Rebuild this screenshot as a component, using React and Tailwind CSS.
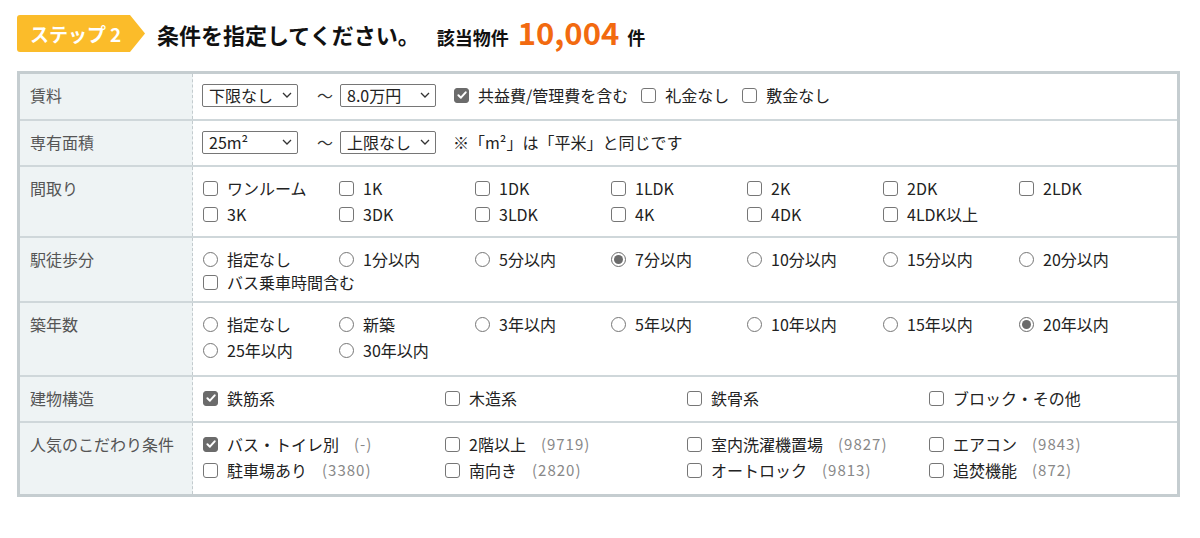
import React from "react";

function Box({ checked }) {
  return (
    <span
      className={
        checked
          ? "inline-flex items-center justify-center w-[15px] h-[15px] rounded-[3px] border border-[#6b6b6b] bg-[#6b6b6b] shrink-0"
          : "inline-flex items-center justify-center w-[15px] h-[15px] rounded-[3px] border border-[#767676] bg-white shrink-0"
      }
    >
      {checked && (
        <svg viewBox="0 0 12 12" className="w-[12px] h-[12px]">
          <path d="M2.4 6.3 L4.9 8.7 L9.7 3.3" fill="none" stroke="white" strokeWidth="2" strokeLinecap="round" strokeLinejoin="round" />
        </svg>
      )}
    </span>
  );
}

function Radio({ checked }) {
  return (
    <span
      className={
        checked
          ? "inline-flex items-center justify-center w-[15px] h-[15px] rounded-full border border-[#6b6b6b] bg-white shrink-0"
          : "inline-flex items-center justify-center w-[15px] h-[15px] rounded-full border border-[#767676] bg-white shrink-0"
      }
    >
      {checked && <span className="w-[9px] h-[9px] rounded-full bg-[#6b6b6b]" />}
    </span>
  );
}

function Item({ label, checked, radio, count }) {
  return (
    <div className="flex items-center h-[26px] pl-[1px]">
      {radio ? <Radio checked={checked} /> : <Box checked={checked} />}
      <span className="ml-[9px] whitespace-nowrap">{label}</span>
      {count && <span className="ml-[15px] text-[15px] tracking-[1px] text-[#888]">{count}</span>}
    </div>
  );
}

function Select({ label }) {
  return (
    <div className="flex items-center justify-between w-[96px] h-[23px] border border-[#767676] rounded-[2px] bg-white pl-[6px] pr-[5px] text-[16px] leading-none">
      <span className="whitespace-nowrap">{label}</span>
      <svg viewBox="0 0 10 6" className="w-[10px] h-[6px]">
        <path d="M1 1 L5 5 L9 1" fill="none" stroke="#333" strokeWidth="1.3" />
      </svg>
    </div>
  );
}

function Row({ label, children, h, last }) {
  return (
    <div className={(last ? "" : "border-b-2 border-[#cfd7da] ") + "flex " + h}>
      <div className="w-[173px] shrink-0 bg-[#eef3f4] border-r border-dashed border-[#c3cbce] pl-[10px] pt-[8px] leading-[26px] text-[#555]">
        {label}
      </div>
      <div className="flex-1 pl-[9px] pt-[8px]">{children}</div>
    </div>
  );
}

const madori = ["ワンルーム", "1K", "1DK", "1LDK", "2K", "2DK", "2LDK", "3K", "3DK", "3LDK", "4K", "4DK", "4LDK以上"];
const walk = ["指定なし", "1分以内", "5分以内", "7分以内", "10分以内", "15分以内", "20分以内"];
const age = ["指定なし", "新築", "3年以内", "5年以内", "10年以内", "15年以内", "20年以内", "25年以内", "30年以内"];
const struct = [["鉄筋系", true], ["木造系"], ["鉄骨系"], ["ブロック・その他"]];
const pop = [
  ["バス・トイレ別", "(-)", true],
  ["2階以上", "(9719)"],
  ["室内洗濯機置場", "(9827)"],
  ["エアコン", "(9843)"],
  ["駐車場あり", "(3380)"],
  ["南向き", "(2820)"],
  ["オートロック", "(9813)"],
  ["追焚機能", "(872)"],
];

export default function App() {
  return (
    <div className="w-[1200px] h-[538px] bg-white font-['Noto_Sans_CJK_JP','Noto_Sans',sans-serif] text-[16px] text-[#222] overflow-hidden">
      <div className="flex items-center pt-[15px] pl-[17px]">
        <div className="w-[128px] h-[37px] bg-[#fbbc2a] rounded-l-[3px] [clip-path:polygon(0_0,113px_0,128px_50%,113px_100%,0_100%)] flex items-center pl-[13px] text-white font-bold text-[19px] leading-none">
          <span>ステップ</span>
          <span className="ml-[4px]">2</span>
        </div>
        <div className="ml-[12px] text-[22px] font-bold text-[#111] leading-none">条件を指定してください。</div>
        <div className="ml-[17px] flex items-baseline font-bold text-[#111]">
          <span className="text-[18px]">該当物件</span>
          <span className="ml-[9px] text-[31px] text-[#f26a10] leading-none">10,004</span>
          <span className="ml-[8px] text-[18px]">件</span>
        </div>
      </div>

      <div className="ml-[17px] mt-[19px] w-[1163px] border-[3px] border-[#c5cdd0]">
        <Row label="賃料" h="h-[47px]">
          <div className="flex items-center h-[26px]">
            <Select label="下限なし" />
            <span className="ml-[19px] mr-[7px] text-[#333]">～</span>
            <Select label="8.0万円" />
            <div className="ml-[17px] flex items-center gap-[12px]">
              <Item label="共益費/管理費を含む" checked />
              <Item label="礼金なし" />
              <Item label="敷金なし" />
            </div>
          </div>
        </Row>
        <Row label="専有面積" h="h-[46px]">
          <div className="flex items-center h-[26px]">
            <Select label="25m²" />
            <span className="ml-[19px] mr-[7px] text-[#333]">～</span>
            <Select label="上限なし" />
            <span className="ml-[17px]">※「m²」は「平米」と同じです</span>
          </div>
        </Row>
        <Row label="間取り" h="h-[71px]">
          <div className="grid grid-cols-[repeat(7,136px)]">
            {madori.map((m) => (
              <Item key={m} label={m} />
            ))}
          </div>
        </Row>
        <Row label="駅徒歩分" h="h-[65px]">
          <div className="grid grid-cols-[repeat(7,136px)]">
            {walk.map((m) => (
              <Item key={m} label={m} radio checked={m === "7分以内"} />
            ))}
          </div>
          <div className="-mt-[3px]">
            <Item label="バス乗車時間含む" />
          </div>
        </Row>
        <Row label="築年数" h="h-[74px]">
          <div className="grid grid-cols-[repeat(7,136px)]">
            {age.map((m) => (
              <Item key={m} label={m} radio checked={m === "20年以内"} />
            ))}
          </div>
        </Row>
        <Row label="建物構造" h="h-[46px]">
          <div className="grid grid-cols-[repeat(4,242px)]">
            {struct.map(([m, c]) => (
              <Item key={m} label={m} checked={c} />
            ))}
          </div>
        </Row>
        <Row label="人気のこだわり条件" h="h-[71px]" last>
          <div className="grid grid-cols-[repeat(4,242px)]">
            {pop.map(([m, n, c]) => (
              <Item key={m} label={m} count={n} checked={c} />
            ))}
          </div>
        </Row>
      </div>
    </div>
  );
}
